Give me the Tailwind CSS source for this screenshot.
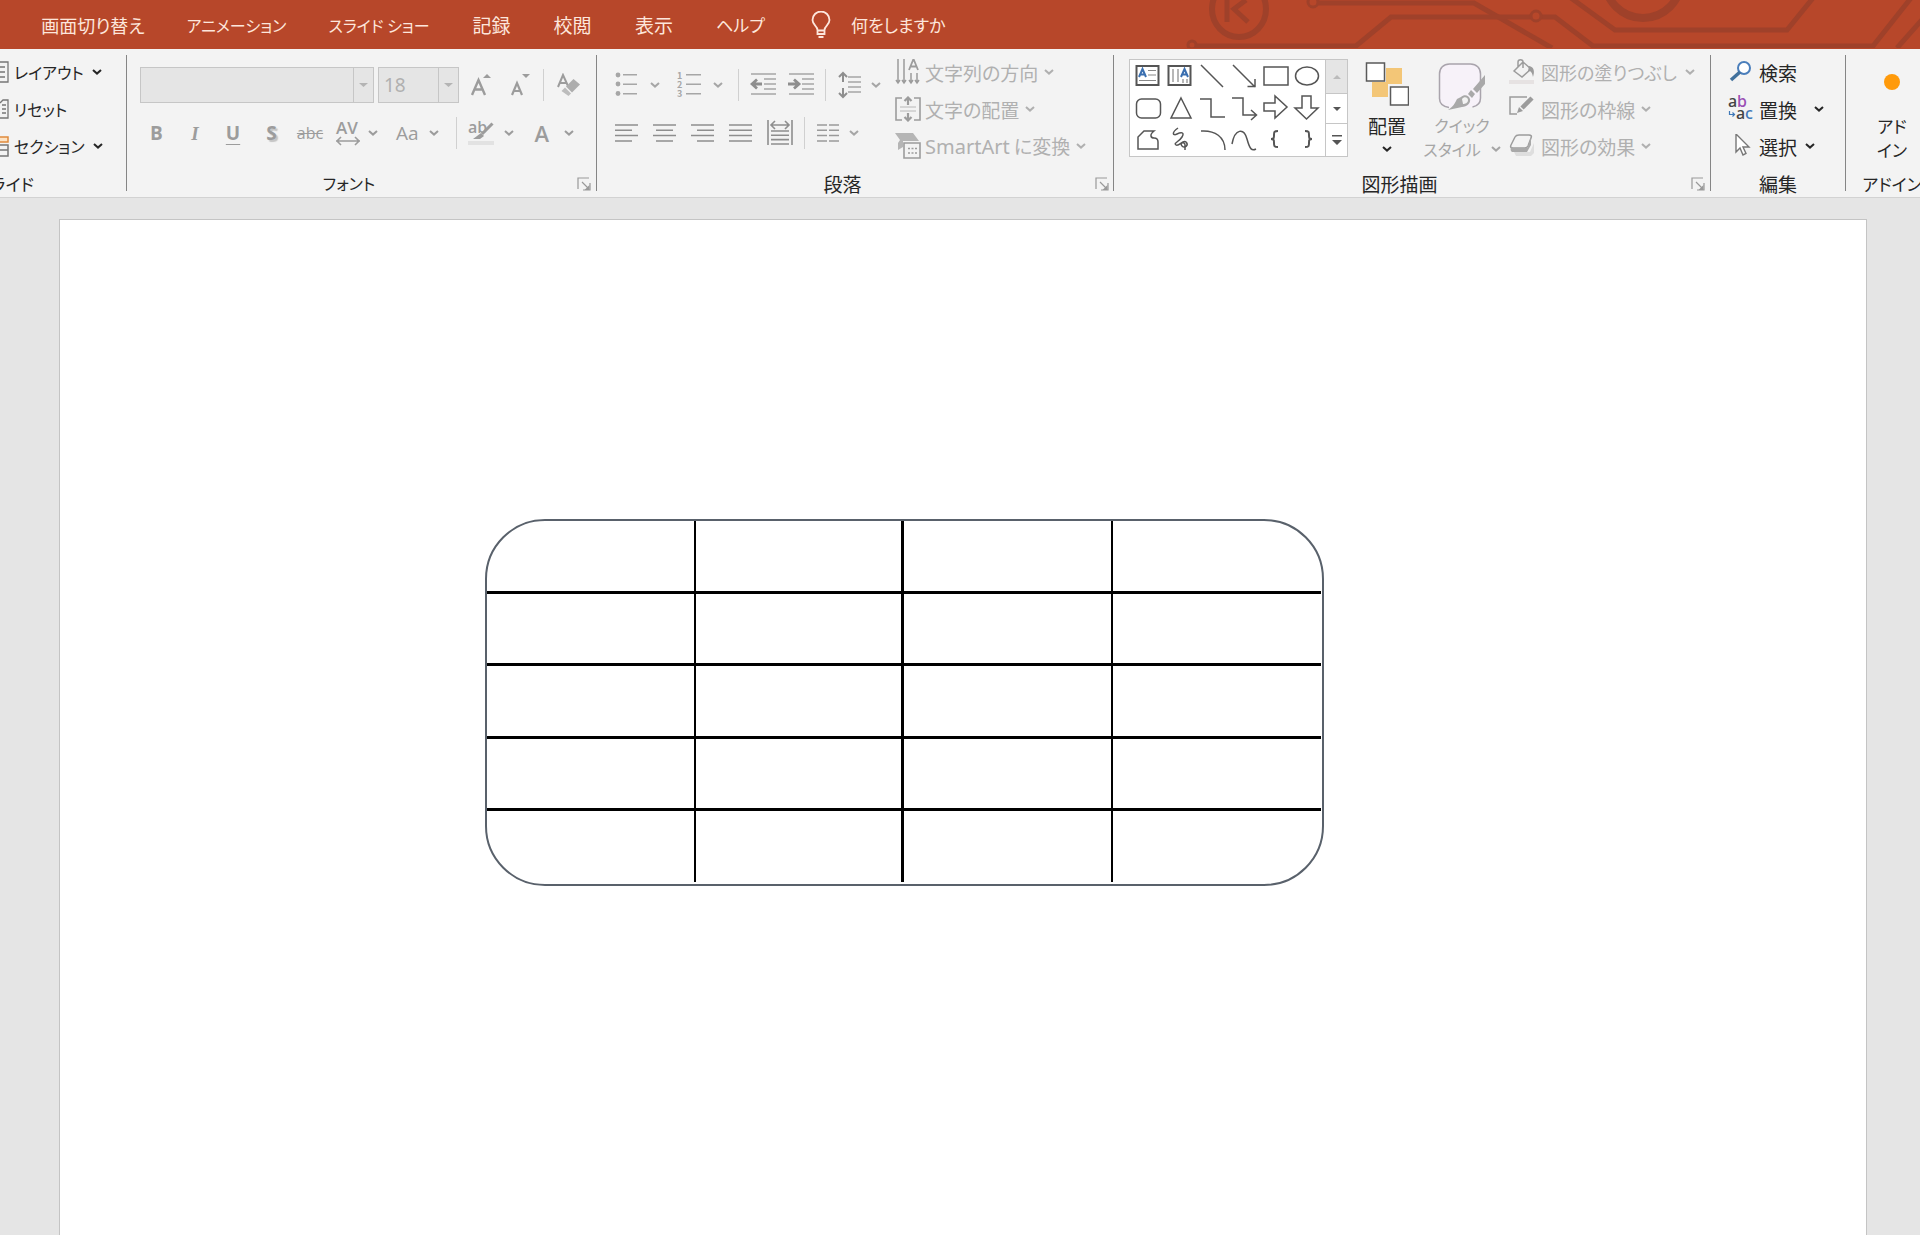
<!DOCTYPE html>
<html lang="ja">
  <head>
    <meta charset="UTF-8" />
    <meta name="viewport" content="width=device-width, initial-scale=1.0" />
    <title>プレゼンテーション</title>
    <!-- Tailwind CSS -->
    <script src="https://cdn.jsdelivr.net/npm/@tailwindcss/browser@4"></script>
  </head>
  <body
    class="min-h-screen flex flex-col overflow-x-hidden bg-[#e5e5e5] text-[19px] leading-none text-[#262626] whitespace-nowrap font-['Noto_Sans_CJK_JP',sans-serif] [font-feature-settings:'palt']"
  >
    <!-- Shared icons -->
    <svg class="hidden">
      <symbol id="chev" viewBox="0 0 10 6">
        <path d="M1 1l4 3.6L9 1" fill="none" stroke="currentColor" stroke-width="2" />
      </symbol>
      <symbol id="launcher" viewBox="0 0 14 14">
        <path d="M1 12V1h11M5 5l6 6M13 6v7H6" fill="none" stroke="currentColor" stroke-width="1.2" />
        <path d="M12.500 8v5h-5z" fill="currentColor" />
      </symbol>
    </svg>

    <!-- Tab bar -->
    <header class="relative h-[49px] shrink-0 bg-[#b7472a] text-[#fde6dc] overflow-hidden">
      <svg
        class="absolute top-0 right-0 w-[760px] h-12"
        viewBox="1160 0 760 48"
        fill="none"
        stroke="#9f412a"
        stroke-width="5"
      >
        <ellipse cx="1239" cy="9" rx="27" ry="28" stroke-width="6" />
        <path d="M1227 0v22M1246 0l-12 9 14 13" stroke-width="5" />
        <circle cx="1313" cy="2" r="5" stroke-width="3" />
        <path d="M1318 3h156l78 45" />
        <circle cx="1192" cy="45" r="4" stroke-width="3" />
        <path d="M1196 46h160l35-29h140M1541 17h14l38 29h280l38-48M1897 48l30-34" />
        <circle cx="1536" cy="16" r="5" stroke-width="3" />
        <path d="M1571-2l44 32h172l26-32" />
        <circle cx="1643" cy="-20" r="38" stroke-width="8" />
      </svg>
      <nav class="relative flex h-full pl-5 items-center">
        <button class="w-[146px] text-[18px]">画面切り替え</button>
        <button class="w-[141px] text-[16px]">アニメーション</button>
        <button class="w-[144px] text-[16px]">スライド ショー</button>
        <button class="w-[81px]">記録</button>
        <button class="w-[81px]">校閲</button>
        <button class="w-[82px]">表示</button>
        <button class="w-[91px] text-[17px]">ヘルプ</button>
        <button class="flex items-center gap-5 pl-[25px] text-[17px]">
          <svg class="w-5 h-7" viewBox="0 0 20 28" fill="none" stroke="currentColor" stroke-width="1.8">
            <path d="M6.500 19c0-4-5-5-5-10a8.500 8.500 0 0 1 17 0c0 5-5 6-5 10v4h-7zM6.500 19.500h7M7.500 26h5" />
          </svg>
          何をしますか
        </button>
      </nav>
    </header>

    <!-- Ribbon -->
    <div class="flex shrink-0 h-[149px] py-[6px] bg-[#f3f3f3] border-b border-[#d2d2d2]">
      <!-- Slides -->
      <section class="w-[127px] shrink-0 flex flex-col border-r border-[#858585]">
        <div class="flex-1 flex flex-col gap-px -mt-px text-[16px]">
          <button class="h-9 flex items-center gap-[5px]">
            <svg class="w-[9px] h-[22px]" viewBox="0 0 9 22" fill="none" stroke="#777" stroke-width="1.300">
              <path d="M0 1h8v20H0M0 6h5M0 11h5M0 16h5" />
            </svg>
            レイアウト
            <svg class="w-[10px] h-[6px] ml-[3px]"><use href="#chev" /></svg>
          </button>
          <button class="h-9 flex items-center gap-[5px]">
            <svg class="w-[9px] h-[20px]" viewBox="0 0 9 20" fill="none" stroke="#777" stroke-width="1.300">
              <path d="M0 4l3-3h5v18H0M2 6h4M2 10h4M2 14h4" />
            </svg>
            リセット
          </button>
          <button class="h-9 flex items-center gap-[5px]">
            <svg class="w-[9px] h-[22px]" viewBox="0 0 9 22" fill="none" stroke-width="1.500">
              <path d="M0 2h8v5H0" fill="#fde3c4" stroke="#e08a3c" />
              <path d="M0 10h8v11H0M0 15h8" stroke="#777" />
            </svg>
            セクション
            <svg class="w-[10px] h-[6px] ml-[3px]"><use href="#chev" /></svg>
          </button>
        </div>
        <h2 class="h-4 w-[34px] flex items-center justify-end text-[17px]">スライド</h2>
      </section>

      <!-- Font -->
      <section class="relative w-[470px] shrink-0 flex flex-col border-r border-[#858585]">
        <div class="flex-1 flex flex-col gap-3 pt-3 text-[#9c9c9c]">
          <div class="flex items-center h-9 pl-[13px]">
            <div class="relative w-[234px] h-9">
              <select disabled aria-label="フォント名" class="appearance-none w-full h-full bg-[#e5e5e5] border border-[#c6c6c6]"></select>
              <svg class="absolute right-0 top-0 w-[21px] h-9" viewBox="0 0 21 36">
                <path d="M.5 0v36" stroke="#c6c6c6" />
                <path d="M6 16h9l-4.500 4z" fill="#b4b4b4" />
              </svg>
            </div>
            <div class="relative w-[81px] h-9 ml-1">
              <select disabled aria-label="フォント サイズ" class="appearance-none w-full h-full pl-[5px] bg-[#e5e5e5] border border-[#c6c6c6] text-[#b0b0b0] font-['Noto_Sans',sans-serif]">
                <option>18</option>
              </select>
              <svg class="absolute right-0 top-0 w-[21px] h-9" viewBox="0 0 21 36">
                <path d="M.5 0v36" stroke="#c6c6c6" />
                <path d="M6 16h9l-4.500 4z" fill="#b4b4b4" />
              </svg>
            </div>
            <button aria-label="フォント サイズの拡大" class="ml-3">
              <svg class="w-[22px] h-6" viewBox="0 0 22 24">
                <path d="M1 22L7.500 7 14 22M3.500 16.500h8" fill="none" stroke="currentColor" stroke-width="2.400" />
                <path d="M12 5l4-4 4 4z" fill="currentColor" />
              </svg>
            </button>
            <button aria-label="フォント サイズの縮小" class="ml-[18px]">
              <svg class="w-5 h-6" viewBox="0 0 20 24">
                <path d="M1 22L6 10l5 12M3 18h6" fill="none" stroke="currentColor" stroke-width="2.200" />
                <path d="M11 1h8l-4 4z" fill="currentColor" />
              </svg>
            </button>
            <div class="w-px h-8 ml-3 bg-[#d0d0d0]"></div>
            <button aria-label="書式のクリア" class="ml-[13px]">
              <svg class="w-6 h-6" viewBox="0 0 24 24">
                <path d="M1 14L6 2l5 11M3 10h6" fill="none" stroke="currentColor" stroke-width="2" />
                <path d="M9 13.500L16.500 6l6.500 5.500-8 8z" fill="#adadad" />
                <path d="M8 14.500l6 6-2.500 2.500-7-5z" fill="#bcbcbc" />
              </svg>
            </button>
          </div>
          <div class="flex items-center h-9 pl-[10px] font-['Open_Sans',sans-serif]">
            <button class="w-[39px] font-bold">B</button>
            <button class="w-[38px] font-['Liberation_Serif',serif] font-bold italic">I</button>
            <button class="w-[38px] font-bold underline underline-offset-4">U</button>
            <button class="w-[39px] font-bold text-shadow-[2px_2px_1px_#c4c4c4]">S</button>
            <button class="w-[38px] text-[16px] line-through">abc</button>
            <button aria-label="文字の間隔" class="flex items-center gap-[7px] ml-[6px]">
              <svg class="w-[26px] h-7 overflow-visible" viewBox="0 0 26 28" fill="none" stroke="currentColor">
                <text x="1" y="15" font-size="17" font-weight="600" fill="currentColor" stroke="none">AV</text>
                <path d="M1 22h24M6 18l-4 4 4 4M20 18l4 4-4 4" stroke-width="1.600" />
              </svg>
              <svg class="w-[10px] h-[6px]"><use href="#chev" /></svg>
            </button>
            <button class="flex items-center gap-[10px] ml-[18px]">
              Aa
              <svg class="w-[10px] h-[6px]"><use href="#chev" /></svg>
            </button>
            <div class="w-px h-8 ml-[17px] bg-[#d0d0d0]"></div>
            <button aria-label="蛍光ペンの色" class="flex items-center gap-[9px] ml-[11px]">
              <svg class="w-[27px] h-7 overflow-visible" viewBox="0 0 27 28">
                <text x="0" y="14" font-size="16" font-weight="600" fill="currentColor">ab</text>
                <path d="M24.500 4.500L14 15" stroke="currentColor" stroke-width="3" />
                <path d="M13 14l3 3-4 3H5z" fill="currentColor" />
                <path d="M0 22h26v4H0z" fill="#e2e2e2" />
              </svg>
              <svg class="w-[10px] h-[6px]"><use href="#chev" /></svg>
            </button>
            <button class="flex items-center gap-[15px] ml-[21px] text-[22px] font-semibold">
              A
              <svg class="w-[10px] h-[6px]"><use href="#chev" /></svg>
            </button>
          </div>
        </div>
        <h2 class="h-4 flex items-center justify-center pr-[25px] text-[16px]">フォント</h2>
        <button aria-label="フォントの設定" class="absolute right-[5px] bottom-0 text-[#999]">
          <svg class="w-[14px] h-[14px]"><use href="#launcher" /></svg>
        </button>
      </section>

      <!-- Paragraph -->
      <section class="relative w-[517px] shrink-0 flex flex-col border-r border-[#858585]">
        <div class="flex-1 flex text-[#a6a6a6]">
          <div class="w-[298px] flex flex-col gap-3 pt-3 pl-[18px]">
            <div class="flex items-center h-9">
              <button aria-label="箇条書き" class="flex items-center gap-[13px]">
                <svg class="w-[22px] h-[26px]" viewBox="0 0 22 26" fill="currentColor">
                  <circle cx="3" cy="3" r="2.400" /><circle cx="3" cy="12" r="2.400" /><circle cx="3" cy="21.500" r="2.400" />
                  <path d="M8 2h14v1.500H8zM8 11.500h14V13H8zM8 21h14v1.500H8z" />
                </svg>
                <svg class="w-[10px] h-[6px]"><use href="#chev" /></svg>
              </button>
              <button aria-label="段落番号" class="flex items-center gap-[12px] ml-[17px]">
                <svg class="w-6 h-[28px]" viewBox="0 0 24 28" fill="currentColor" font-size="9" font-weight="700">
                  <text x="0" y="8">1</text><text x="0" y="17">2</text><text x="0" y="26">3</text>
                  <path d="M9 3h15v1.500H9zM9 12.500h15V14H9zM9 22h15v1.500H9z" />
                </svg>
                <svg class="w-[10px] h-[6px]"><use href="#chev" /></svg>
              </button>
              <div class="w-px h-8 ml-[15px] bg-[#d0d0d0]"></div>
              <button aria-label="インデントを減らす" class="ml-[11px]">
                <svg class="w-[26px] h-6" viewBox="0 0 26 24" fill="none" stroke="currentColor" stroke-width="1.600">
                  <path d="M1 1h25M14 6h12M14 11h12M14 16h12M1 21h25" />
                  <path d="M2 11h10M7 6.500L2 11l5 4.500" stroke="#8e8e8e" stroke-width="2.800" />
                </svg>
              </button>
              <button aria-label="インデントを増やす" class="ml-3">
                <svg class="w-[26px] h-6" viewBox="0 0 26 24" fill="none" stroke="currentColor" stroke-width="1.600">
                  <path d="M1 1h25M14 6h12M14 11h12M14 16h12M1 21h25" />
                  <path d="M0 11h10M6 6.500l5 4.500-5 4.500" stroke="#8e8e8e" stroke-width="2.800" />
                </svg>
              </button>
              <div class="w-px h-8 ml-[11px] bg-[#d0d0d0]"></div>
              <button aria-label="行間" class="flex items-center gap-[9px] ml-3">
                <svg class="w-6 h-7" viewBox="0 0 24 28" fill="none" stroke="currentColor" stroke-width="1.600">
                  <path d="M10 6h13M10 11h13M10 16h13M10 21h13" />
                  <path d="M5 2v9M1 6l4-4 4 4M5 26v-9M1 22l4 4 4-4" stroke="#8e8e8e" stroke-width="2" />
                </svg>
                <svg class="w-[10px] h-[6px]"><use href="#chev" /></svg>
              </button>
            </div>
            <div class="flex items-center h-9">
              <button aria-label="左揃え">
                <svg class="w-6 h-[18px]" viewBox="0 0 24 18" stroke="#8e8e8e" stroke-width="1.500"><path d="M0 1h23M0 6.300h17M0 11.600h23M0 17h17" /></svg>
              </button>
              <button aria-label="中央揃え" class="ml-[14px]">
                <svg class="w-6 h-[18px]" viewBox="0 0 24 18" stroke="#8e8e8e" stroke-width="1.500"><path d="M0 1h23M3 6.300h17M0 11.600h23M3 17h17" /></svg>
              </button>
              <button aria-label="右揃え" class="ml-[14px]">
                <svg class="w-6 h-[18px]" viewBox="0 0 24 18" stroke="#8e8e8e" stroke-width="1.500"><path d="M0 1h23M6 6.300h17M0 11.600h23M6 17h17" /></svg>
              </button>
              <button aria-label="両端揃え" class="ml-[14px]">
                <svg class="w-6 h-[18px]" viewBox="0 0 24 18" stroke="#8e8e8e" stroke-width="1.500"><path d="M0 1h23M0 6.300h23M0 11.600h23M0 17h23" /></svg>
              </button>
              <button aria-label="均等割り付け" class="ml-[14px]">
                <svg class="w-[26px] h-[26px]" viewBox="0 0 26 26" fill="none" stroke="#8e8e8e" stroke-width="1.600">
                  <path d="M1 0v25M25 0v25M4 11h18M4 15.300h18M4 19.600h18M4 24h18M4 5h18M8 1L4 5l4 4M18 1l4 4-4 4" />
                </svg>
              </button>
              <div class="w-px h-8 ml-[11px] bg-[#d0d0d0]"></div>
              <button aria-label="段の追加" class="flex items-center gap-[10px] ml-3">
                <svg class="w-[22px] h-[18px]" viewBox="0 0 22 18" stroke="#9a9a9a" stroke-width="1.500"><path d="M0 1h10M12 1h10M0 6.300h10M12 6.300h10M0 11.600h10M12 11.600h10M0 17h10M12 17h10" /></svg>
                <svg class="w-[10px] h-[6px]"><use href="#chev" /></svg>
              </button>
            </div>
          </div>
          <div class="flex flex-col gap-px -mt-px text-[#b0b0b0]">
            <button class="h-9 flex items-center gap-1">
              <svg class="w-[26px] h-[26px]" viewBox="0 0 26 26" fill="none" stroke="#9c9c9c" stroke-width="1.500">
                <path d="M3 0v23M9 0v23M16 14v9M22 14v9M1 21l2 3 2-3M7 21l2 3 2-3M14 21l2 3 2-3M20 21l2 3 2-3" />
                <path d="M14 11l4.500-11L23 11M15.500 7.500h6" stroke-width="1.800" />
              </svg>
              文字列の方向
              <svg class="w-[10px] h-[6px] ml-[2px]"><use href="#chev" /></svg>
            </button>
            <button class="h-9 flex items-center gap-1">
              <svg class="w-[26px] h-[26px]" viewBox="0 0 26 26" fill="none" stroke="#9c9c9c" stroke-width="1.600">
                <path d="M7 2H1v22h6M19 2h6v22h-6" />
                <path d="M5 11h16M5 15h16" stroke-width="1" stroke="#b8b8b8" />
                <path d="M13 9V2M9.500 5L13 1.500 16.500 5M13 17v7M9.500 21l3.500 3.500 3.500-3.500" stroke-width="2.200" />
              </svg>
              文字の配置
              <svg class="w-[10px] h-[6px] ml-[2px]"><use href="#chev" /></svg>
            </button>
            <button class="h-9 flex items-center gap-1">
              <svg class="w-[26px] h-[26px]" viewBox="0 0 26 26">
                <path d="M0 0h18l6 8H8v6l-5 3V10l2-3z" fill="#b5b5b5" />
                <path d="M9 10h16v15H9z" fill="#f3f3f3" stroke="#9c9c9c" stroke-width="1.600" />
                <path d="M13 15.500h9M13 20h9" stroke="#9c9c9c" stroke-width="1.500" stroke-dasharray="2 1.500" />
              </svg>
              <span><span class="font-['Noto_Sans',sans-serif] text-[20px]">SmartArt</span> に変換</span>
              <svg class="w-[10px] h-[6px] ml-[2px]"><use href="#chev" /></svg>
            </button>
          </div>
        </div>
        <h2 class="h-4 flex items-center justify-center pr-[25px]">段落</h2>
        <button aria-label="段落の設定" class="absolute right-1 bottom-0 text-[#999]">
          <svg class="w-[14px] h-[14px]"><use href="#launcher" /></svg>
        </button>
      </section>

      <!-- Drawing -->
      <section class="relative w-[597px] shrink-0 flex flex-col border-r border-[#858585]">
        <div class="flex-1 flex items-start pl-[15px]">
          <!-- Shape gallery -->
          <div class="flex w-[219px] h-[98px] mt-1 bg-white border border-[#c6c6c6] text-[#555]">
            <svg class="flex-1 h-24" viewBox="0 0 195 96" fill="none" stroke="currentColor" stroke-width="1.500">
              <path d="M6.500 6h22v19h-22z" stroke-width="2" />
              <path d="M18 10.500h8M18 15h8M9 20.500h17" stroke="#888" stroke-width="1.200" />
              <path d="M9 17l3.500-8 3.500 8M10 14.500h5" stroke="#3a6fb0" stroke-width="2" />
              <path d="M38.500 6h22v19h-22z" stroke-width="2" />
              <path d="M43 9v13M48 9v13M53 19v4M57 19v4" stroke="#888" stroke-width="1.200" />
              <path d="M51 17l3.500-8 3.500 8M52 14.500h5" stroke="#3a6fb0" stroke-width="2" />
              <path d="M71 5l22 22M103 5l22 22M117.500 26.500h7.500v-7.500" />
              <path d="M134 7h24v18h-24z" />
              <ellipse cx="177" cy="16" rx="11.500" ry="9" />
              <rect x="6.500" y="39" width="24" height="19" rx="5" />
              <path d="M51 38l10 20H41zM70 39h11v18h14M102 38h11v17h13M121 50l5.500 5L121 60" />
              <path d="M134 43h11v-7l12 11-12 11v-7h-11zM172 36h9v12h7l-11.500 11L165 48h7z" />
              <path d="M8 89V77l6-6h10c-5 4-3 7 0 7 3 0 4 1 4 4v7z" />
              <path d="M48 68c-7 5-5 8-1 6s8-2 5 3-9 6-6 8 7-6 10-3-1 7-4 4 3-5 3-1v5" />
              <path d="M71 71c14-1 24 6 24 19M102 84c3-16 12-16 15-5s5 12 9 10" />
              <path d="M148 71c-4 0-4 1-4 4s0 4-3 4c3 0 3 1 3 4s0 4 4 4M175 71c4 0 4 1 4 4s0 4 3 4c-3 0-3 1-3 4s0 4-4 4" stroke-width="2" />
            </svg>
            <div class="w-[22px] flex flex-col border-l border-[#c6c6c6] divide-y divide-[#c6c6c6]">
              <button aria-label="上へ" class="h-[34px] bg-[#e5e5e5] flex items-center justify-center">
                <svg class="w-2 h-1" viewBox="0 0 8 4"><path d="M0 4h8L4 0z" fill="#bbb" /></svg>
              </button>
              <button aria-label="下へ" class="h-[30px] flex items-center justify-center">
                <svg class="w-2 h-1" viewBox="0 0 8 4"><path d="M0 0h8L4 4z" fill="#555" /></svg>
              </button>
              <button aria-label="その他" class="flex-1 flex items-center justify-center">
                <svg class="w-[10px] h-[11px]" viewBox="0 0 10 11"><path d="M0 0h10v1.500H0zM0 5h10l-5 5z" fill="#555" /></svg>
              </button>
            </div>
          </div>
          <button class="w-[50px] ml-[14px] pt-[7px] flex flex-col items-center">
            <svg class="w-[44px] h-[44px]" viewBox="0 0 44 44">
              <path d="M21 6h16v16H21zM7 20h16v15H7z" fill="#f3c677" />
              <path d="M1.500 1h18v18h-18zM25.500 25h18v18h-18z" fill="#fff" stroke="#5a5a5a" stroke-width="1.500" />
            </svg>
            <span class="mt-[10px]">配置</span>
            <svg class="w-[10px] h-[6px] mt-[11px]"><use href="#chev" /></svg>
          </button>
          <button class="w-[86px] ml-[7px] pt-[7px] flex flex-col items-center text-[#a6a6a6] text-[16px]">
            <svg class="w-[50px] h-[50px]" viewBox="0 0 50 50">
              <path d="M12 45.500c-6-1-9.500-4-9.500-9V12c0-6 4-10 10-10h21c6 0 10 4 10 10v24c0 5-3 8-8 9" fill="#f7f2f9" stroke="#a9a4ac" stroke-width="1.500" />
              <path d="M48 13v9l-8 9-4-4zM34 28l4 4-3 4-4-4z" fill="#a9a9a9" />
              <path d="M24 35c3-3 8-2 9 2s-3 8-8 8l-14 3c5-3 7-7 9-11z" fill="#a9a9a9" />
              <path d="M25 37c2-3 6-2 6 1s-3 4-5 4z" fill="#f3f3f3" />
            </svg>
            <span class="mt-[5px]">クイック</span>
            <span class="flex items-center gap-[10px] mt-2">スタイル<svg class="w-[10px] h-[6px]"><use href="#chev" /></svg></span>
          </button>
          <div class="flex flex-col gap-px -mt-px pl-1 text-[#b0b0b0]">
            <button class="h-9 flex items-center gap-[6px] text-[18px]">
              <svg class="w-[26px] h-[26px]" viewBox="0 0 26 26" fill="none" stroke="#9c9c9c" stroke-width="1.500">
                <path d="M5 12l9-9 8 7-9 8zM9 8V3c0-3 5-3 5 0v6" />
                <path d="M20 7c5 1 6 5 4 11-1-5-2-6-5-6z" fill="#9c9c9c" stroke="none" />
                <path d="M0 21h25v4H0z" fill="#e6e2e2" stroke="none" />
              </svg>
              図形の塗りつぶし
              <svg class="w-[10px] h-[6px] ml-[2px]"><use href="#chev" /></svg>
            </button>
            <button class="h-9 flex items-center gap-[6px]">
              <svg class="w-[26px] h-[26px]" viewBox="0 0 26 26" fill="none" stroke="#9c9c9c" stroke-width="1.500">
                <path d="M18 1H1v17h7" />
                <path d="M23 2L13 12" stroke-width="4.500" />
                <path d="M10 11l4 4-6 2z" fill="#9c9c9c" stroke="none" />
              </svg>
              図形の枠線
              <svg class="w-[10px] h-[6px]"><use href="#chev" /></svg>
            </button>
            <button class="h-9 flex items-center gap-[6px]">
              <svg class="w-[26px] h-[26px]" viewBox="0 0 26 26">
                <path d="M5 19h16l4-9v10l-3 3H7z" fill="#dedede" />
                <path d="M6 4c1-2 2-2 4-2h10c2 0 3 1 2 3l-3 8c-1 2-2 2-4 2H4c-2 0-3-1-2-3z" fill="#f3f3f3" stroke="#9c9c9c" stroke-width="1.500" />
                <path d="M22 4v8l-4 7H4c-2 0-3-2-2-5 1 1 2 1 3 1h11c2 0 3-1 3-2z" fill="#a9a9a9" />
              </svg>
              図形の効果
              <svg class="w-[10px] h-[6px]"><use href="#chev" /></svg>
            </button>
          </div>
        </div>
        <h2 class="h-4 flex items-center justify-center pr-[25px]">図形描画</h2>
        <button aria-label="図形の書式設定" class="absolute right-[5px] bottom-0 text-[#999]">
          <svg class="w-[14px] h-[14px]"><use href="#launcher" /></svg>
        </button>
      </section>

      <!-- Editing -->
      <section class="w-[135px] shrink-0 flex flex-col border-r border-[#858585]">
        <div class="flex-1 flex flex-col gap-px -mt-px pl-[17px]">
          <button class="h-9 flex items-center gap-[5px]">
            <svg class="w-[26px] h-6" viewBox="0 0 26 24" fill="none">
              <circle cx="16" cy="8" r="6" fill="#fff" stroke="#4a7ebb" stroke-width="2" />
              <path d="M12 12l-9 8" stroke="#41719c" stroke-width="3.500" />
            </svg>
            検索
          </button>
          <button class="h-9 flex items-center gap-[5px]">
            <svg class="w-[26px] h-[26px] overflow-visible" viewBox="0 0 26 26" font-family="Noto Sans" font-size="16" font-weight="500">
              <text x="0" y="11" fill="#444">a</text><text x="9" y="11" fill="#9a4fb5">b</text>
              <text x="8" y="23" fill="#444">a</text><text x="17" y="23" fill="#3f79b8">c</text>
              <path d="M1.500 15v3.500H6M4.500 16.500l2 2-2 2" fill="none" stroke="#3f79b8" stroke-width="1.200" />
            </svg>
            置換
            <svg class="w-[10px] h-[6px] ml-3"><use href="#chev" /></svg>
          </button>
          <button class="h-9 flex items-center gap-[5px]">
            <svg class="w-[26px] h-6" viewBox="0 0 26 24">
              <path d="M8 0v18l4-4 3 7 3-1.500-3-6.500h6z" fill="#fff" stroke="#777" stroke-width="1.400" />
            </svg>
            選択
            <svg class="w-[10px] h-[6px] ml-[3px]"><use href="#chev" /></svg>
          </button>
        </div>
        <h2 class="h-4 flex items-center justify-center">編集</h2>
      </section>

      <!-- Add-ins -->
      <section class="w-[92px] shrink-0 flex flex-col items-center text-[17px]">
        <button class="flex-1 flex flex-col items-center gap-[7px] pt-[19px]">
          <svg class="w-4 h-4 mb-5" viewBox="0 0 16 16"><circle cx="8" cy="8" r="8" fill="#ff9a0a" /></svg>
          <span>アド</span>
          <span>イン</span>
        </button>
        <h2 class="h-4 flex items-center">アドイン</h2>
      </section>
    </div>

    <!-- Slide -->
    <main class="flex-1 flex pt-[21px] pl-[59px] pr-[53px]">
      <div class="relative flex-1 bg-white border border-b-0 border-[#c4c4c4]">
        <div class="absolute left-[425px] top-[299px] w-[839px] h-[367px] border-2 border-[#59616b] rounded-[60px]">
          <table class="w-[834px] table-fixed border-separate border-spacing-0 text-black">
            <tr class="h-[73px]">
              <td class="border-b-3 border-r-2"></td>
              <td class="border-b-3 border-r-3"></td>
              <td class="border-b-3 border-r-2"></td>
              <td class="border-b-3"></td>
            </tr>
            <tr class="h-[72px]">
              <td class="border-b-3 border-r-2"></td>
              <td class="border-b-3 border-r-3"></td>
              <td class="border-b-3 border-r-2"></td>
              <td class="border-b-3"></td>
            </tr>
            <tr class="h-[73px]">
              <td class="border-b-3 border-r-2"></td>
              <td class="border-b-3 border-r-3"></td>
              <td class="border-b-3 border-r-2"></td>
              <td class="border-b-3"></td>
            </tr>
            <tr class="h-[72px]">
              <td class="border-b-3 border-r-2"></td>
              <td class="border-b-3 border-r-3"></td>
              <td class="border-b-3 border-r-2"></td>
              <td class="border-b-3"></td>
            </tr>
            <tr class="h-[71px]">
              <td class="border-r-2"></td>
              <td class="border-r-3"></td>
              <td class="border-r-2"></td>
              <td></td>
            </tr>
          </table>
        </div>
      </div>
    </main>
  </body>
</html>
